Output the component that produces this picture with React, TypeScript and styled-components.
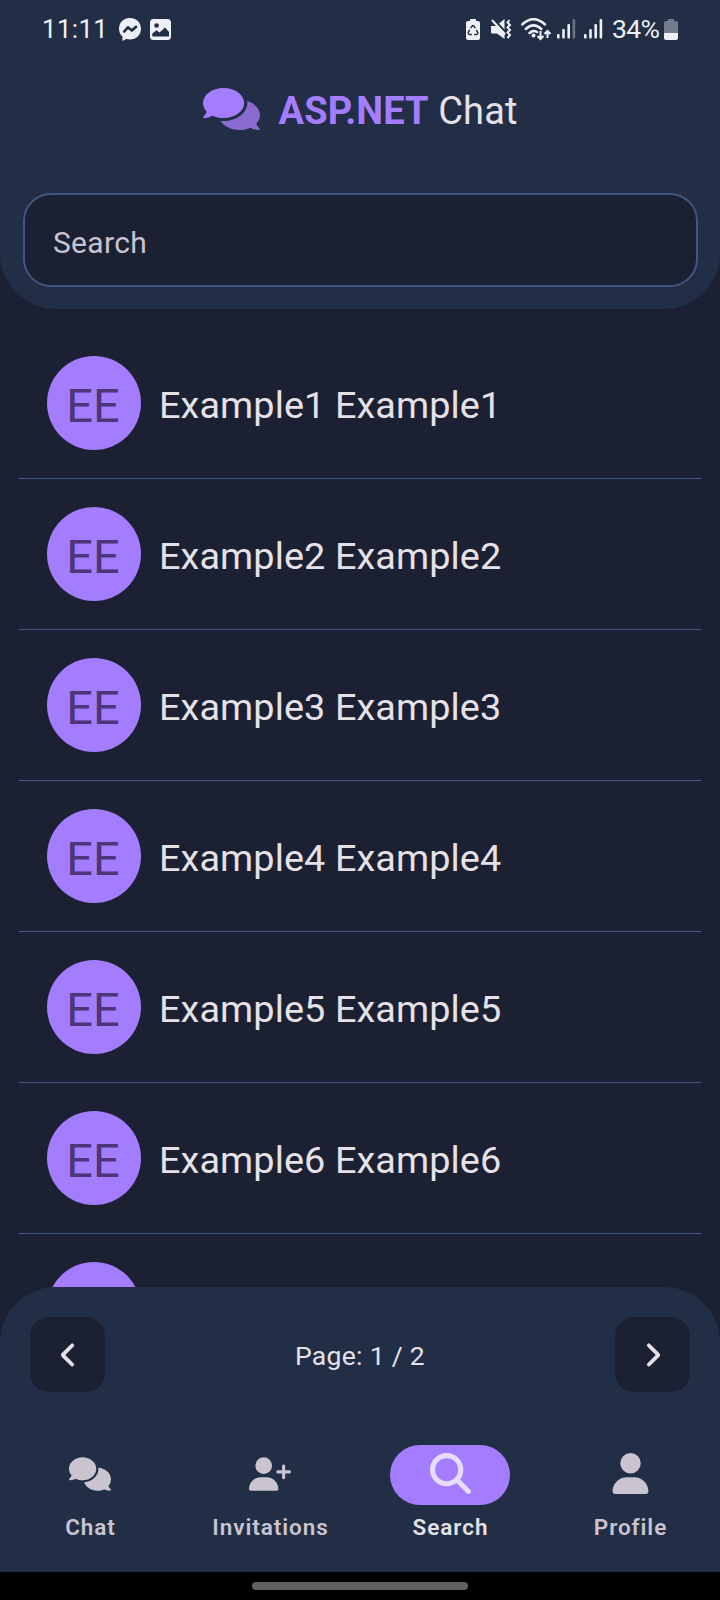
import React from "react";
import styled, { createGlobalStyle } from "styled-components";
import { FaChevronLeft, FaChevronRight, FaComments, FaMagnifyingGlass, FaUser, FaUserPlus } from "react-icons/fa6";

const Global = createGlobalStyle`
  * { box-sizing: border-box; }
  body { margin: 0; background: #1b2132; font-family: Roboto, sans-serif; }
`;

const Screen = styled.div`
  width: 720px;
  height: 1600px;
  display: flex;
  flex-direction: column;
  overflow: hidden;
  background: #1b2132;
  color: #e6e1e6;
`;

const Header = styled.header`
  height: 309px;
  flex: none;
  display: flex;
  flex-direction: column;
  background: #222e46;
  border-radius: 0 0 56px 56px;
`;

const StatusBar = styled.div`
  height: 58px;
  flex: none;
  display: flex;
  justify-content: space-between;
  padding: 0 42px;
  color: #edf0f5;
`;

const StatusGroup = styled.div`
  display: flex;
  align-items: center;
  height: 58px;
`;

const Clock = styled.span`
  font-size: 26px;
  line-height: 30px;
  letter-spacing: 0.3px;
  width: 77px;
`;

const Percent = styled.span`
  font-size: 26.5px;
  line-height: 30px;
  width: 52px;
  letter-spacing: -0.6px;
  white-space: nowrap;
`;

const StatusIcon = styled.svg<{ $gap?: number }>`
  flex: none;
  display: block;
  margin-right: ${(p) => p.$gap ?? 0}px;
`;

const Brand = styled.div`
  height: 135px;
  padding-top: 30px;
  display: flex;
  justify-content: center;
  align-items: flex-start;
  gap: 19px;
`;

const Logo = styled.svg`
  display: block;
  width: 57px;
  height: 42px;
`;

const Title = styled.h1`
  margin: 0;
  font-size: 38px;
  line-height: 46px;
  font-weight: 400;
  letter-spacing: 0.1px;
  white-space: nowrap;
`;

const TitleAccent = styled.span`
  color: #a47dff;
  font-weight: 700;
`;

const SearchBox = styled.input`
  height: 94px;
  margin: 0 22px 0 23px;
  padding: 4px 28px 0;
  border: 2px solid #425580;
  border-radius: 28px;
  outline: none;
  background: #1b2132;
  color: #e6e1e6;
  font: 400 30px Roboto, sans-serif;
  letter-spacing: 0.3px;
  &::placeholder { color: #c9c4d0; opacity: 1; }
`;

const List = styled.ul`
  flex: 1;
  min-height: 0;
  margin: 0;
  padding: 19px 19px 0;
  list-style: none;
  overflow: hidden;
`;

const Row = styled.li`
  height: 151px;
  padding: 28px;
  display: flex;
  align-items: flex-start;
  gap: 18px;
  border-bottom: 1px solid #425580;
`;

const Avatar = styled.div`
  width: 94px;
  height: 94px;
  flex: none;
  padding: 27px 2px 0 0;
  border-radius: 50%;
  background: #a47dff;
  color: #4c3579;
  font-size: 46.9px;
  line-height: 46px;
  text-align: center;
`;

const Name = styled.span`
  padding-top: 27px;
  font-size: 37.8px;
  line-height: 44px;
  letter-spacing: 0.1px;
  white-space: nowrap;
`;

const Footer = styled.footer`
  height: 285px;
  flex: none;
  background: #222e46;
  border-radius: 56px 56px 0 0;
`;

const Pager = styled.div`
  height: 158px;
  padding: 30px 30px 0;
  display: flex;
  justify-content: space-between;
  align-items: flex-start;
`;

const PagerButton = styled.button<{ $next?: boolean }>`
  width: 75px;
  height: 75px;
  padding: ${(p) => (p.$next ? "0 1px 0 0" : "0 0 0 2px")};
  display: flex;
  align-items: center;
  justify-content: center;
  border: 0;
  border-radius: 19px;
  background: #1b2132;
  color: #e6e1e6;
  svg {
    width: 16px;
    height: 26px;
    stroke: currentColor;
    stroke-width: 14px;
  }
`;

const PageLabel = styled.span`
  font-size: 26.5px;
  line-height: 78px;
  letter-spacing: 0.3px;
`;

const Nav = styled.nav`
  display: grid;
  grid-template-columns: repeat(4, 1fr);
`;

const NavItem = styled.a<{ $active?: boolean }>`
  display: flex;
  flex-direction: column;
  align-items: center;
  color: ${(p) => (p.$active ? "#e6e1e6" : "#c9c4d0")};
`;

const NavPill = styled.span<{ $active?: boolean }>`
  width: 120px;
  height: 60px;
  padding-bottom: 3px;
  display: flex;
  align-items: center;
  justify-content: center;
  border-radius: 30px;
  background: ${(p) => (p.$active ? "#a47dff" : "transparent")};
  color: ${(p) => (p.$active ? "#e8dcfc" : "inherit")};
`;

const NavText = styled.span`
  margin-top: 7px;
  padding-left: 1px;
  font-size: 22.5px;
  line-height: 30px;
  font-weight: 600;
  letter-spacing: 0.95px;
`;

const GestureBar = styled.div`
  height: 28px;
  flex: none;
  padding-top: 10px;
  background: #000;
`;

const GestureHandle = styled.div`
  width: 216px;
  height: 8px;
  margin: 0 auto;
  border-radius: 4px;
  background: #606060;
`;

const people = [1, 2, 3, 4, 5, 6, 7];

const tabs = [
  { label: "Chat", icon: <FaComments size="42px" /> },
  { label: "Invitations", icon: <FaUserPlus size="42px" /> },
  { label: "Search", icon: <FaMagnifyingGlass size="41px" />, active: true },
  { label: "Profile", icon: <FaUser size="41px" /> },
];

const Signal = ({ weak, gap }: { weak?: boolean; gap: number }) => (
  <StatusIcon $gap={gap} width="19" height="20" viewBox="0 0 19 20" fill="currentColor">
    <rect x="0" y="15" width="2.6" height="4.5" rx="1" />
    <rect x="5.2" y="10" width="2.6" height="9.5" rx="1" />
    <rect x="10.4" y="5" width="2.6" height="14.5" rx="1" />
    <rect x="15.6" y="0" width="2.6" height="19.5" rx="1" opacity={weak ? 0.35 : 1} />
  </StatusIcon>
);

export default function App() {
  return (
    <>
      <Global />
      <Screen>
        <Header>
          <StatusBar>
            <StatusGroup>
              <Clock>11:11</Clock>
              <StatusIcon $gap={9} width="22" height="23" viewBox="0 0 22 23">
                <path d="M11 0C4.700 0 0 4.500 0 10.700c0 3.300 1.300 6 3.400 7.900V23l3.900-2.100c1.200.3 2.400.5 3.700.5 6.300 0 11-4.500 11-10.700S17.300 0 11 0z" fill="currentColor" />
                <path d="M5.200 13.500 8.900 9.300l4 3.200 4.200-3.700" fill="none" stroke="#222e46" strokeWidth="2.6" strokeLinecap="round" strokeLinejoin="round" />
              </StatusIcon>
              <StatusIcon width="21" height="21" viewBox="0 0 21 21">
                <rect width="21" height="21" rx="3.5" fill="currentColor" />
                <circle cx="6.600" cy="6.500" r="2.300" fill="#222e46" />
                <path d="M2.300 17.500v-3l4.200-3.200 3 2.200 5.500-5 4 4.500v4.500z" fill="#222e46" />
              </StatusIcon>
            </StatusGroup>
            <StatusGroup>
              <StatusIcon $gap={11} width="14" height="21" viewBox="0 0 14 21">
                <path d="M4 0h6v2h2q2 0 2 2v15q0 2-2 2H2q-2 0-2-2V4q0-2 2-2h2z" fill="currentColor" />
                <path d="M4.800 9.200 6.200 7q.8-1 1.600 0l1.400 2.200M10.300 10.800l1.500 2.800q.3 1.700-1.200 1.900H8.300M5.900 15.500H3.400q-1.500-.3-1.200-1.900l1.500-2.800" fill="none" stroke="#222e46" strokeWidth="1.400" />
              </StatusIcon>
              <StatusIcon $gap={9} width="21" height="21" viewBox="0 0 21 21">
                <path d="M0 7h5L13.500 0v20L6 14.500H1q-1 0-1-1z" fill="currentColor" />
                <path d="m2.500 0 12 13" stroke="#222e46" strokeWidth="2" />
                <path d="m1 1 13 14.500" stroke="currentColor" strokeWidth="2" />
                <path d="m18.500 1-2 2.500 2.500 2.500-2.500 2.500L19 11l-2.500 2.500L19 16l-2.500 3" fill="none" stroke="currentColor" strokeWidth="2" />
              </StatusIcon>
              <StatusIcon $gap={6} width="30" height="23" viewBox="0 0 30 23">
                <g fill="none" stroke="currentColor" strokeWidth="2.500" strokeLinecap="round">
                  <path d="M1.200 6.500Q12.500-4 24 6.500M4.800 11Q12.500 3.800 20.300 11M8.500 15Q12.500 11.500 16 14" />
                </g>
                <circle cx="12.500" cy="17.500" r="2" fill="currentColor" />
                <path d="M19.500 13v8m-3-3 3 3 3-3M26.500 20v-7m-3 3 3-3 3 3" fill="none" stroke="currentColor" strokeWidth="2" />
              </StatusIcon>
              <Signal weak gap={8} />
              <Signal gap={9} />
              <Percent>34%</Percent>
              <StatusIcon width="14" height="21" viewBox="0 0 14 21">
                <path d="M4 0h6v2h2q2 0 2 2v10H0V4q0-2 2-2h2z" fill="#737b8d" />
                <path d="M0 14h14v5q0 2-2 2H2q-2 0-2-2z" fill="currentColor" />
              </StatusIcon>
            </StatusGroup>
          </StatusBar>
          <Brand>
            <Logo viewBox="0 32 576 448" preserveAspectRatio="none">
              <path fill="#a47dff" d="M416 192c0-88.400-93.100-160-208-160S0 103.600 0 192c0 34.300 14.100 65.900 38 92-13.400 30.200-35.500 54.200-35.800 54.500-2.200 2.300-2.800 5.700-1.500 8.700S4.800 352 8 352c36.600 0 66.900-12.300 88.700-25 32.200 15.700 70.300 25 111.300 25 114.900 0 208-71.600 208-160z" />
              <path fill="#8a6bd0" d="M538 412c23.900-26 38-57.700 38-92 0-66.900-53.500-124.200-129.300-148.100.9 6.600 1.300 13.300 1.300 20.100 0 105.900-107.700 192-240 192-10.800 0-21.300-.8-31.700-1.900C207.800 439.600 281.800 480 368 480c41 0 79.100-9.200 111.300-25 21.800 12.700 52.100 25 88.700 25 3.200 0 6.100-1.900 7.300-4.800 1.300-3 .7-6.300-1.500-8.700-.3-.3-22.400-24.200-35.800-54.500z" />
            </Logo>
            <Title>
              <TitleAccent>ASP.NET</TitleAccent> Chat
            </Title>
          </Brand>
          <SearchBox placeholder="Search" />
        </Header>
        <List>
          {people.map((n) => (
            <Row key={n}>
              <Avatar>EE</Avatar>
              <Name>{`Example${n} Example${n}`}</Name>
            </Row>
          ))}
        </List>
        <Footer>
          <Pager>
            <PagerButton aria-label="Previous page">
              <FaChevronLeft />
            </PagerButton>
            <PageLabel>Page: 1 / 2</PageLabel>
            <PagerButton $next aria-label="Next page">
              <FaChevronRight />
            </PagerButton>
          </Pager>
          <Nav>
            {tabs.map((t) => (
              <NavItem key={t.label} $active={t.active}>
                <NavPill $active={t.active}>{t.icon}</NavPill>
                <NavText>{t.label}</NavText>
              </NavItem>
            ))}
          </Nav>
        </Footer>
        <GestureBar>
          <GestureHandle />
        </GestureBar>
      </Screen>
    </>
  );
}
